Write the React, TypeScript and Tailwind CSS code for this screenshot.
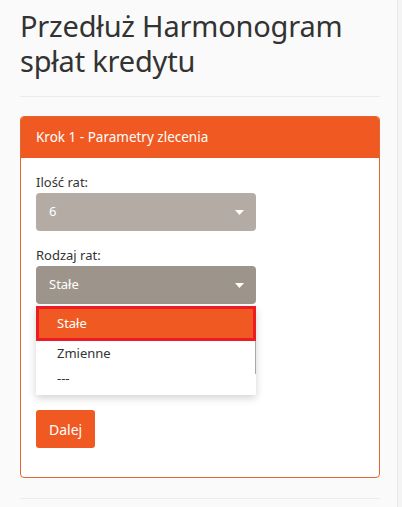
import { useState } from "react"

const font = { fontFamily: '"Noto Sans", "Open Sans", sans-serif' }

const options = ["Stałe", "Zmienne", "---"]

function Caret() {
  return (
    <svg width="9" height="5" viewBox="0 0 9 5" className="fill-white">
      <path d="M0 0h9L4.5 5z" />
    </svg>
  )
}

export default function App() {
  const [selected] = useState("Stałe")

  return (
    <div className="min-h-screen bg-[#f4f4f4]" style={font}>
      <div className="w-[398px] min-h-[507px] bg-[#fafafa] border-r border-[#e8e8e8] pl-5 pt-[8px]">
        {/* Header */}
        <h1 className="text-[29px] leading-[35px] text-[#333] font-normal tracking-[-0.2px]">
          Przedłuż Harmonogram spłat kredytu
        </h1>
        <hr className="mt-[18px] w-[360px] border-t border-[#ececec]" />

        {/* Step panel */}
        <div className="mt-[19px] w-[360px] rounded-[4px] border border-[#e0672f] bg-white">
          <div className="h-[41px] bg-[#f05a22] rounded-t-[3px] flex items-center px-[15px]">
            <span className="text-[13.5px] text-white">Krok 1 - Parametry zlecenia</span>
          </div>
          <div className="px-[15px] pt-[15px] pb-[29px]">
            <label className="block text-[13px] leading-[18px] text-[#333] mb-[2px]">Ilość rat:</label>
            <div className="w-[220px] h-[38px] rounded-[4px] bg-[#b3aba4] flex items-center justify-between pl-[13px] pr-[12px]">
              <span className="text-[13px] text-white">6</span>
              <Caret />
            </div>

            <label className="block text-[13px] leading-[18px] text-[#333] mt-[15px] mb-[2px]">Rodzaj rat:</label>
            <div className="w-[220px]">
              <div className="h-[38px] rounded-[4px] bg-[#9d958b] flex items-center justify-between pl-[13px] pr-[12px]">
                <span className="text-[13px] text-white">{selected}</span>
                <Caret />
              </div>
              {/* Open dropdown list */}
              <div className="relative mt-[2px] bg-white shadow-[0_3px_8px_rgba(0,0,0,0.18)] pb-[4px]">
                {options.map((opt) =>
                  opt === selected ? (
                    <div
                      key={opt}
                      className="h-[35px] border-[3px] border-[#ed1c24] bg-[#f05a22] flex items-center pl-[18px] text-[13px] text-white"
                    >
                      {opt}
                    </div>
                  ) : (
                    <div key={opt} className="h-[25px] flex items-center pl-[21px] text-[13px] text-[#333]">
                      {opt}
                    </div>
                  )
                )}
                <div className="absolute right-0 top-[35px] h-[33px] w-px bg-[#a8a8a8]" />
              </div>
            </div>

            <button className="mt-[15px] h-[38px] px-[13px] rounded-[3px] bg-[#f05a22] text-white text-[14px]">
              Dalej
            </button>
          </div>
        </div>

        <hr className="mt-5 w-[360px] border-t border-[#ececec]" />
      </div>
    </div>
  )
}
